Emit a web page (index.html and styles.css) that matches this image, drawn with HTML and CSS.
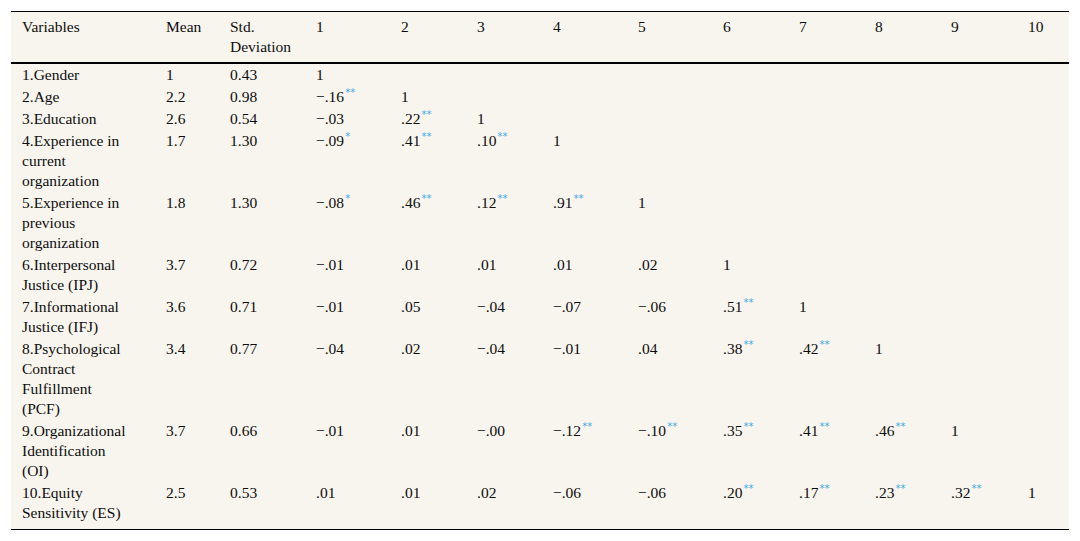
FILE: index.html
```html
<!DOCTYPE html>
<html>
<head>
<meta charset="utf-8">
<link rel="stylesheet" href="styles.css">
</head>
<body>
<div class="wrap">
<table class="corr">
<colgroup>
<col class="c-var"><col class="c-mean"><col class="c-sd"><col class="c-1"><col class="c-2"><col class="c-3"><col class="c-4"><col class="c-5"><col class="c-6"><col class="c-7"><col class="c-8"><col class="c-9"><col class="c-10">
</colgroup>
<thead>
<tr><th>Variables</th><th>Mean</th><th>Std.<br>Deviation</th><th>1</th><th>2</th><th>3</th><th>4</th><th>5</th><th>6</th><th>7</th><th>8</th><th>9</th><th>10</th></tr>
</thead>
<tbody>
<tr><td>1.Gender</td><td>1</td><td>0.43</td><td>1</td><td></td><td></td><td></td><td></td><td></td><td></td><td></td><td></td><td></td></tr>
<tr><td>2.Age</td><td>2.2</td><td>0.98</td><td>−.16<sup class="sig">**</sup></td><td>1</td><td></td><td></td><td></td><td></td><td></td><td></td><td></td><td></td></tr>
<tr><td>3.Education</td><td>2.6</td><td>0.54</td><td>−.03</td><td>.22<sup class="sig">**</sup></td><td>1</td><td></td><td></td><td></td><td></td><td></td><td></td><td></td></tr>
<tr><td>4.Experience in<br>current<br>organization</td><td>1.7</td><td>1.30</td><td>−.09<sup class="sig">*</sup></td><td>.41<sup class="sig">**</sup></td><td>.10<sup class="sig">**</sup></td><td>1</td><td></td><td></td><td></td><td></td><td></td><td></td></tr>
<tr><td>5.Experience in<br>previous<br>organization</td><td>1.8</td><td>1.30</td><td>−.08<sup class="sig">*</sup></td><td>.46<sup class="sig">**</sup></td><td>.12<sup class="sig">**</sup></td><td>.91<sup class="sig">**</sup></td><td>1</td><td></td><td></td><td></td><td></td><td></td></tr>
<tr><td>6.Interpersonal<br>Justice (IPJ)</td><td>3.7</td><td>0.72</td><td>−.01</td><td>.01</td><td>.01</td><td>.01</td><td>.02</td><td>1</td><td></td><td></td><td></td><td></td></tr>
<tr><td>7.Informational<br>Justice (IFJ)</td><td>3.6</td><td>0.71</td><td>−.01</td><td>.05</td><td>−.04</td><td>−.07</td><td>−.06</td><td>.51<sup class="sig">**</sup></td><td>1</td><td></td><td></td><td></td></tr>
<tr><td>8.Psychological<br>Contract<br>Fulfillment<br>(PCF)</td><td>3.4</td><td>0.77</td><td>−.04</td><td>.02</td><td>−.04</td><td>−.01</td><td>.04</td><td>.38<sup class="sig">**</sup></td><td>.42<sup class="sig">**</sup></td><td>1</td><td></td><td></td></tr>
<tr><td>9.Organizational<br>Identification<br>(OI)</td><td>3.7</td><td>0.66</td><td>−.01</td><td>.01</td><td>−.00</td><td>−.12<sup class="sig">**</sup></td><td>−.10<sup class="sig">**</sup></td><td>.35<sup class="sig">**</sup></td><td>.41<sup class="sig">**</sup></td><td>.46<sup class="sig">**</sup></td><td>1</td><td></td></tr>
<tr class="last"><td>10.Equity<br>Sensitivity (ES)</td><td>2.5</td><td>0.53</td><td>.01</td><td>.01</td><td>.02</td><td>−.06</td><td>−.06</td><td>.20<sup class="sig">**</sup></td><td>.17<sup class="sig">**</sup></td><td>.23<sup class="sig">**</sup></td><td>.32<sup class="sig">**</sup></td><td>1</td></tr>
</tbody>
</table>
</div>
</body>
</html>
```
FILE: styles.css
```css
html, body {
  margin: 0;
  padding: 0;
  background: #ffffff;
}
.wrap {
  padding: 11px 11px 0 11px;
}
.corr {
  width: 1058px;
  table-layout: fixed;
  border-collapse: collapse;
  background: #f8f5ef;
  font-family: "Liberation Serif", "Times New Roman", serif;
  font-size: 15.5px;
  line-height: 20px;
  color: #0d0d0d;
  border-top: 1px solid #000;
  border-bottom: 1px solid #000;
}
.c-var { width: 144px; }
.c-mean { width: 64px; }
.c-sd { width: 86px; }
.c-1 { width: 85px; }
.c-2 { width: 76px; }
.c-3 { width: 76px; }
.c-4 { width: 85px; }
.c-5 { width: 85px; }
.c-6 { width: 76px; }
.c-7 { width: 76px; }
.c-8 { width: 76px; }
.c-9 { width: 77px; }
.c-10 { width: 52px; }
.corr th {
  font-weight: normal;
  text-align: left;
  vertical-align: top;
  padding: 5px 0 5px 11px;
  white-space: nowrap;
}
.corr thead tr {
  border-bottom: 2px solid #000;
}
.corr td {
  text-align: left;
  vertical-align: top;
  padding: 1px 0 1px 11px;
  white-space: nowrap;
}
.corr tr.last td {
  padding-bottom: 6px;
}
.sig {
  color: #3fa9e6;
  font-family: "DejaVu Sans", sans-serif;
  font-size: 10px;
  line-height: 0;
  vertical-align: 6px;
  margin-left: 1px;
}
```
